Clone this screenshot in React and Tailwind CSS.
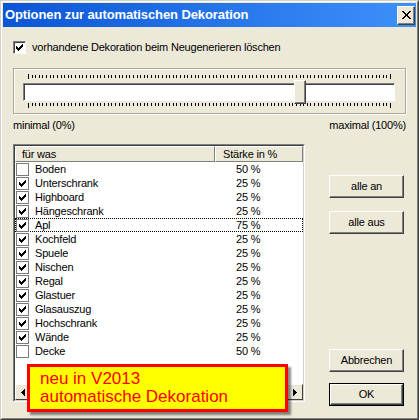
const items = [
  ["Boden", false, "50 %"],
  ["Unterschrank", true, "25 %"],
  ["Highboard", true, "25 %"],
  ["Hängeschrank", true, "25 %"],
  ["Apl", true, "75 %"],
  ["Kochfeld", true, "25 %"],
  ["Spuele", true, "25 %"],
  ["Nischen", true, "25 %"],
  ["Regal", true, "25 %"],
  ["Glastuer", true, "25 %"],
  ["Glasauszug", true, "25 %"],
  ["Hochschrank", true, "25 %"],
  ["Wände", true, "25 %"],
  ["Decke", false, "50 %"],
];

// classic 7x7 windows tick
const CheckMark = () => (
  <svg width="7" height="7" viewBox="0 0 7 7" shapeRendering="crispEdges" className="block">
    {[2, 3, 4, 3, 2, 1, 0].map((y, x) => (
      <rect key={x} x={x} y={y} width="1" height="3" fill="#000" />
    ))}
  </svg>
);

const Check = ({ checked, sunken }) => (
  <span
    className={
      sunken
        ? "w-[13px] h-[13px] shrink-0 flex items-center justify-center bg-white border border-t-[#808080] border-l-[#808080] border-r-white border-b-white shadow-[inset_1px_1px_0_#404040]"
        : "w-[13px] h-[13px] shrink-0 flex items-center justify-center bg-white border border-[#7a7a7a]"
    }
  >
    {checked && <CheckMark />}
  </span>
);

const Ticks = ({ top }) => (
  <svg width="364" height="6" className="block" shapeRendering="crispEdges">
    {Array.from({ length: 101 }, (_, i) => {
      const x = Math.round(i * 3.62);
      const end = i === 0 || i === 100;
      if (top) {
        return <rect key={i} x={x} y={end ? 1 : 2} width="1" height={end ? 5 : 3} fill="#000" />;
      }
      return <rect key={i} x={x} y="0" width="1" height={end ? 5 : 3} fill="#000" />;
    })}
  </svg>
);

const Button = ({ children, isDefault }) => {
  const inner = (
    <div className="h-full w-full flex items-center justify-center bg-[#ece9d8] border border-t-white border-l-white border-r-[#404040] border-b-[#404040] shadow-[inset_-1px_-1px_0_#808080] text-[11px] text-black">
      {children}
    </div>
  );
  if (isDefault) {
    return <div className="w-[75px] h-[23px] border border-black">{inner}</div>;
  }
  return <div className="w-[75px] h-[23px]">{inner}</div>;
};

const Arrow = ({ left }) => (
  <div className="w-[16px] h-[16px] flex items-center justify-center bg-[#ece9d8] border border-t-white border-l-white border-r-[#404040] border-b-[#404040]">
    <svg width="4" height="7" viewBox="0 0 4 7" shapeRendering="crispEdges">
      {left ? <path d="M4 0 L0 3.5 L4 7 Z" fill="#000" /> : <path d="M0 0 L4 3.5 L0 7 Z" fill="#000" />}
    </svg>
  </div>
);

export default function App() {
  return (
    <div className="w-[419px] h-[420px] relative font-['Liberation_Sans',Arial,sans-serif] text-black border border-t-[#d4d0c8] border-l-[#d4d0c8] border-r-[#404040] border-b-[#404040]">
      <div className="h-full w-full border border-t-white border-l-white border-r-[#808080] border-b-[#808080] bg-[#ece9d8] p-[1px] flex flex-col">
        {/* title bar */}
        <div className="h-[24px] shrink-0 flex items-center justify-between bg-gradient-to-r from-[#0a55d6] to-[#3d91fb] pl-[2px]">
          <span className="text-white font-bold text-[13px] tracking-[-0.1px]">
            Optionen zur automatischen Dekoration
          </span>
          <div className="w-[18px] h-[19px] mr-[1px] flex items-center justify-center bg-[#ece9d8] border border-t-white border-l-white border-r-[#404040] border-b-[#404040] shadow-[inset_-1px_-1px_0_#808080]">
            <svg width="9" height="8" viewBox="0 0 9 8" shapeRendering="crispEdges">
              <path d="M0 0 H2 L4.5 2.8 L7 0 H9 L5.6 4 L9 8 H7 L4.5 5.2 L2 8 H0 L3.4 4 Z" fill="#000" />
            </svg>
          </div>
        </div>

        <div className="flex flex-col px-[10px] tracking-[-0.2px]">
          <div className="flex items-center mt-[14px] h-[13px]">
            <Check checked sunken />
            <span className="ml-[6px] text-[11px]">vorhandene Dekoration beim Neugenerieren löschen</span>
          </div>

          {/* slider group */}
          <div className="mt-[14px] h-[46px] border border-[#aca899] shadow-[inset_1px_1px_0_white,1px_1px_0_white] flex flex-col">
            <div className="ml-[14px] mt-[4px]">
              <Ticks top />
            </div>
            <div className="ml-[9px] mt-[4px] w-[372px] h-[18px] relative bg-white border border-t-[#808080] border-l-[#808080] border-r-white border-b-white shadow-[inset_1px_1px_0_#404040]">
              <div className="absolute left-[270px] -top-[4px] w-[12px] h-[24px] bg-[#ece9d8] border border-t-white border-l-white border-r-[#404040] border-b-[#404040] shadow-[inset_-1px_-1px_0_#808080]" />
            </div>
            <div className="ml-[14px] mt-[2px]">
              <Ticks />
            </div>
          </div>

          <div className="flex justify-between mt-[5px] text-[11px] leading-[13px]">
            <span>minimal (0%)</span>
            <span>maximal (100%)</span>
          </div>

          <div className="flex mt-[12px]">
            {/* list */}
            <div className="w-[292px] h-[258px] border border-t-[#808080] border-l-[#808080] border-r-white border-b-white">
              <div className="h-full w-full border border-t-[#404040] border-l-[#404040] border-r-[#d4d0c8] border-b-[#d4d0c8] bg-white flex flex-col">
                <div className="flex h-[16px] shrink-0 text-[11px]">
                  <div className="w-[200px] pl-[6px] flex items-center bg-[#ece9d8] border border-t-white border-l-white border-r-[#808080] border-b-[#808080]">
                    für was
                  </div>
                  <div className="flex-1 pl-[7px] flex items-center bg-[#ece9d8] border border-t-white border-l-white border-r-[#808080] border-b-[#808080]">
                    Stärke in %
                  </div>
                </div>
                {items.map(([name, on, pct], i) => (
                  <div
                    key={name}
                    className={
                      i === 4
                        ? "flex items-center h-[14px] text-[11px] border border-dotted border-black"
                        : "flex items-center h-[14px] text-[11px] border border-transparent"
                    }
                  >
                    <Check checked={on} />
                    <span className="ml-[6px] w-[201px]">{name}</span>
                    <span>{pct}</span>
                  </div>
                ))}
                <div className="flex-1" />
                <div className="h-[16px] shrink-0 flex justify-between bg-[#f3f1e8]">
                  <Arrow left />
                  <Arrow />
                </div>
              </div>
            </div>

            {/* buttons */}
            <div className="ml-[24px] flex flex-col">
              <div className="mt-[31px]">
                <Button>alle an</Button>
              </div>
              <div className="mt-[13px]">
                <Button>alle aus</Button>
              </div>
              <div className="mt-[115px]">
                <Button>Abbrechen</Button>
              </div>
              <div className="mt-[11px]">
                <Button isDefault>OK</Button>
              </div>
            </div>
          </div>
        </div>
      </div>

      {/* annotation overlay */}
      <div className="absolute left-[26px] top-[363px] w-[261px] h-[48px] bg-[#ffff00] border-[3px] border-[#ff0000] shadow-[3px_3px_2px_rgba(0,0,0,0.45)] pl-[10px] pt-[3px] text-[#ff0000] text-[17px] leading-[18px]">
        <div>neu in V2013</div>
        <div>automatische Dekoration</div>
      </div>
    </div>
  );
}
